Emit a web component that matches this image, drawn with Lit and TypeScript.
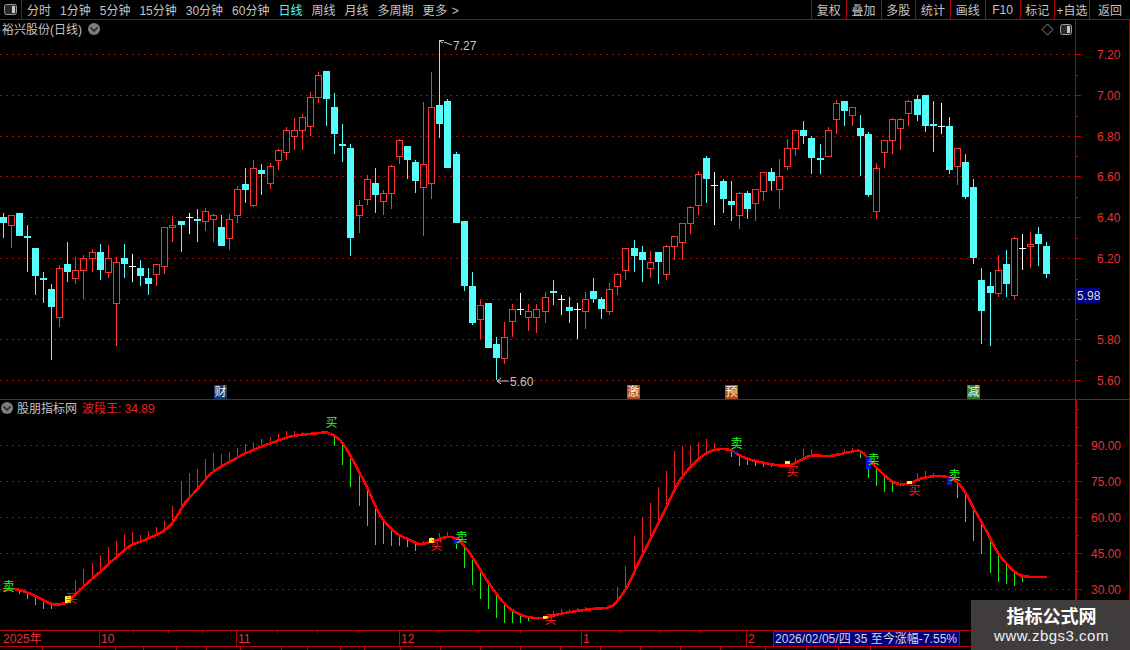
import { LitElement, html, css, svg } from "lit";
import { customElement } from "lit/decorators.js";

type Kind = "c" | "r" | "w";
type Candle = [number, number, number, number, number, Kind];

const CANDLES: Candle[] = [
  [3,213,217,223,238,"c"],[11,215,215,226,248,"r"],[19,213,213,236,236,"c"],[27,225,236,238,272,"c"],
  [35,248,248,276,295,"c"],[43,272,278,280,303,"c"],[51,284,289,307,360,"c"],[59,265,268,318,327,"r"],
  [67,242,264,272,282,"c"],[75,257,270,279,284,"r"],[83,255,258,271,299,"r"],[92,249,252,259,272,"r"],
  [100,244,252,270,280,"c"],[108,245,258,273,278,"r"],[116,257,262,304,346,"r"],[124,244,258,264,278,"c"],
  [132,254,266,267,282,"w"],[140,260,268,276,286,"c"],[148,268,278,284,295,"c"],[156,264,264,275,286,"r"],
  [164,227,227,267,274,"r"],[172,216,225,228,242,"r"],[181,221,221,225,252,"c"],[189,213,217,218,234,"w"],
  [197,209,219,221,242,"c"],[205,208,211,222,231,"r"],[213,214,215,220,242,"r"],[221,215,227,246,246,"c"],
  [229,214,219,239,250,"r"],[237,186,189,216,223,"r"],[245,168,184,190,203,"c"],[253,160,168,206,207,"r"],
  [261,164,170,174,195,"c"],[270,163,166,184,189,"r"],[278,149,150,161,170,"r"],[286,127,130,153,160,"r"],
  [294,118,130,137,150,"r"],[302,114,117,131,150,"r"],[310,92,97,127,136,"r"],[318,72,75,98,103,"r"],
  [326,71,71,99,126,"c"],[334,93,107,134,154,"c"],[342,124,144,146,162,"c"],[350,144,148,238,256,"c"],
  [359,200,205,216,233,"r"],[367,175,179,200,205,"r"],[375,168,183,195,213,"c"],[383,190,193,202,215,"r"],
  [391,165,166,194,209,"r"],[399,139,140,157,164,"r"],[407,146,146,160,179,"c"],[415,160,162,181,193,"c"],
  [423,102,164,188,236,"r"],[431,72,107,184,199,"r"],[439,40,105,124,138,"c"],[447,99,101,168,168,"c"],
  [456,152,154,223,223,"c"],[464,221,221,286,291,"c"],[472,272,286,323,325,"c"],[480,300,305,320,339,"r"],
  [488,303,303,348,348,"c"],[496,337,344,358,380,"c"],[504,322,337,359,364,"r"],[512,304,309,322,337,"r"],
  [520,293,309,310,315,"w"],[528,304,311,318,331,"r"],[536,304,309,318,333,"r"],[545,292,297,312,323,"r"],
  [553,280,291,293,305,"c"],[561,295,299,300,315,"w"],[569,297,307,311,323,"c"],[577,303,309,310,339,"w"],
  [585,292,299,312,329,"r"],[593,278,291,299,303,"c"],[601,297,299,309,319,"c"],[609,283,289,312,315,"r"],
  [617,273,274,287,295,"r"],[625,248,248,271,280,"r"],[634,240,248,256,272,"c"],[642,246,252,260,282,"c"],
  [650,251,262,269,278,"r"],[658,252,252,262,284,"c"],[666,245,246,275,280,"r"],[674,236,236,247,260,"r"],
  [682,223,223,243,260,"r"],[690,206,207,224,234,"r"],[698,171,174,206,215,"r"],[706,156,158,179,203,"c"],
  [714,172,185,186,225,"w"],[723,179,181,199,213,"c"],[731,181,201,205,221,"c"],[739,192,193,216,229,"r"],
  [747,191,193,209,219,"c"],[755,189,189,204,221,"r"],[763,172,172,192,201,"r"],[771,168,172,181,191,"c"],
  [779,159,176,190,209,"r"],[787,139,148,167,170,"r"],[795,129,130,149,156,"r"],[803,121,130,136,144,"c"],
  [811,136,138,158,174,"c"],[820,144,158,160,174,"c"],[828,127,130,157,157,"r"],[836,100,103,120,134,"r"],
  [844,101,101,111,126,"c"],[852,107,107,116,126,"r"],[860,115,128,136,176,"c"],[868,132,134,195,197,"c"],
  [876,163,168,212,219,"r"],[884,140,140,153,168,"r"],[892,118,119,141,154,"r"],[900,118,119,129,150,"r"],
  [908,100,101,114,126,"r"],[917,95,99,115,121,"c"],[925,95,95,126,132,"c"],[933,101,124,126,152,"c"],
  [941,103,126,127,134,"w"],[949,117,126,170,174,"c"],[957,148,148,167,185,"r"],[965,154,162,197,199,"c"],
  [973,179,187,258,264,"c"],[981,268,280,311,344,"c"],[990,272,286,293,346,"c"],[998,255,270,294,297,"r"],
  [1006,250,264,284,297,"c"],[1014,237,238,296,299,"r"],[1022,234,248,249,270,"w"],[1030,232,244,247,268,"r"],
  [1038,227,234,244,266,"c"],[1046,242,246,274,278,"c"],
];

const KNOTS: [number, number][] = [
  [3,590],[13,589],[23,591],[33,595],[43,600],[52,604],[62,604],[68,601],[75,595],[83,587],[100,572],[113,560],
  [130,546],[145,540],[165,530],[175,519],[185,503],[193,494],[200,486],[213,472],[233,460],[253,450],[277,441],[293,436],
  [320,433],[328,433],[340,440],[350,455],[358,470],[367,487],[380,515],[395,532],[410,540],[420,544],[433,541],
  [447,537],[457,539],[465,547],[473,558],[488,582],[503,602],[515,612],[528,617],[543,618],[560,614],[577,611],
  [593,609],[610,607],[618,600],[627,587],[640,560],[650,540],[665,510],[680,480],[700,458],[715,450],[730,450],
  [745,458],[770,464],[790,465],[810,456],[830,456],[850,452],[860,451],[867,457],[877,468],[890,480],[900,484],
  [910,483],[923,478],[937,476],[947,477],[957,482],[965,492],[973,507],[982,523],[990,538],[998,553],[1007,564],
  [1015,572],[1023,576],[1033,577],[1047,577],
];

const smooth = (pts: [number, number][]): [number, number][] => {
  const out: [number, number][] = [];
  for (let i = 0; i < pts.length - 1; i++) {
    const p0 = pts[Math.max(i - 1, 0)];
    const p1 = pts[i];
    const p2 = pts[i + 1];
    const p3 = pts[Math.min(i + 2, pts.length - 1)];
    const n = Math.max(Math.round((p2[0] - p1[0]) / 2), 1);
    for (let j = 0; j < n; j++) {
      const t = j / n;
      const t2 = t * t;
      const t3 = t2 * t;
      const f = (a: number, b: number, c: number, d: number) =>
        0.5 * (2 * b + (c - a) * t + (2 * a - 5 * b + 4 * c - d) * t2 + (3 * b - a - 3 * c + d) * t3);
      out.push([f(p0[0], p1[0], p2[0], p3[0]), f(p0[1], p1[1], p2[1], p3[1])]);
    }
  }
  out.push(pts[pts.length - 1]);
  return out;
};

const CURVE = smooth(KNOTS);

const curveY = (x: number): number => {
  for (let i = 1; i < CURVE.length; i++) {
    const [x0, y0] = CURVE[i - 1];
    const [x1, y1] = CURVE[i];
    if (x <= x1) return y0 + ((y1 - y0) * (x - x0)) / Math.max(x1 - x0, 0.001);
  }
  return CURVE[CURVE.length - 1][1];
};

const PRICE_LINES = [54, 95, 136, 176, 217, 258, 299, 339, 380];
const PRICE_LABELS: [number, string][] = [
  [54,"7.20"],[95,"7.00"],[136,"6.80"],[176,"6.60"],[217,"6.40"],[258,"6.20"],[339,"5.80"],[380,"5.60"],
];
const IND_LINES: [number, string][] = [[445,"90.00"],[481,"75.00"],[517,"60.00"],[553,"45.00"],[589,"30.00"]];
const SIGNALS: [number, number, string, string][] = [
  [3,592,"卖","#22ff22"],[66,604,"买","#ff2020"],[326,428,"买","#22ff22"],[431,551,"买","#ff2020"],
  [456,543,"卖","#22ff22"],[545,625,"买","#ff2020"],[731,449,"卖","#22ff22"],[787,477,"买","#ff2020"],
  [868,465,"卖","#22ff22"],[909,496,"买","#ff2020"],[949,481,"卖","#22ff22"],
];
const SQUARES: [number, number, number, number, string][] = [
  [65,596,6,7,"#ffee22"],[429,538,5,5,"#ffee22"],[454,539,5,5,"#1010ee"],[543,616,5,3,"#ffee22"],
  [785,461,5,3,"#ffee22"],[866,457,5,12,"#1010ee"],[907,481,5,3,"#ffee22"],[947,477,5,8,"#1010ee"],
  [3,589,6,1,"#1010ee"],[326,433,5,1,"#1010ee"],[733,451,5,2,"#1010ee"],
];
const TAGS: [number, string, string][] = [
  [214,"财","#123c70"],[627,"激","#b54a12"],[725,"预","#b54a12"],[967,"减","#2f7a2a"],
];
const DATE_MARKS: [number, string][] = [[99,"10"],[236,"11"],[399,"12"],[581,"1"],[746,"2"]];
const DATE_TICKS = [133,168,202,277,317,358,438,478,520,620,660,700,790];
const FOOT_TICKS = [42,115,143,176,206,240,281,307,340,364,400,440,480,520,560,600,640,680,720,765,806,838,870];
const LEFT_TABS = ["分时","1分钟","5分钟","15分钟","30分钟","60分钟","日线","周线","月线","多周期","更多 >"];
const RIGHT_TABS = ["复权","叠加","多股","统计","画线","F10","标记","+自选","返回"];

@customElement("app-root")
export class AppRoot extends LitElement {
  static styles = css`
    :host {
      display: block;
      width: 1130px;
      height: 650px;
      background: #000;
      overflow: hidden;
      position: relative;
      font-family: "Liberation Sans", "Noto Sans CJK SC", sans-serif;
      font-size: 12px;
      color: #c4c4c4;
    }
    .toolbar {
      display: flex;
      height: 19px;
      border-bottom: 1px solid #b00000;
      align-items: stretch;
    }
    .panel-btn {
      border-right: 1px solid #b00000;
      display: flex;
      align-items: center;
      padding-left: 4px;
      width: 17px;
    }
    .tabs {
      display: flex;
      align-items: center;
      gap: 9px;
      padding-left: 5px;
      flex: 1;
    }
    .tab.on { color: #54fcfc; }
    .more { letter-spacing: 0.6px; }
    .buttons { display: flex; }
    .btn {
      width: 33.75px;
      border-left: 1px solid #b00000;
      display: flex;
      align-items: center;
      justify-content: center;
      white-space: nowrap;
    }
    .btn:last-child { width: 40px; }
    .panel { display: block; width: 1130px; }
    .price { height: 380px; }
    .indicator { height: 230px; }
    .strip { height: 17px; }
    .foot { height: 3px; }
    svg text { font-family: "Liberation Sans", "Noto Sans CJK SC", sans-serif; font-size: 12px; }
    .crisp { shape-rendering: crispEdges; }
    .watermark {
      position: absolute;
      left: 971px;
      top: 600px;
      width: 159px;
      height: 50px;
      background: #413c3c;
      display: flex;
      flex-direction: column;
      align-items: center;
      padding-left: 2px;
      box-sizing: border-box;
    }
    .wm-title {
      color: #fff;
      font-size: 18px;
      font-weight: 700;
      line-height: 22px;
      margin-top: 4px;
      font-family: "Noto Sans CJK SC", sans-serif;
    }
    .wm-url {
      color: #eaf0fa;
      font-size: 15px;
      line-height: 20px;
      letter-spacing: 0.5px;
    }
  `;

  private candle(c: Candle) {
    const [x, h, t, b, l, k] = c;
    if (k === "r") {
      return svg`<rect x=${x} y=${h} width="1" height=${l - h} fill="#ff3232"></rect>
        <rect x=${x - 2.5} y=${t + 0.5} width="6" height=${Math.max(b - t - 1, 1)} fill="#000" stroke="#ff3232"></rect>`;
    }
    const col = k === "c" ? "#54fcfc" : "#ffffff";
    return svg`<rect x=${x} y=${h} width="1" height=${l - h} fill=${col}></rect>
      <rect x=${x - 3} y=${t} width="7" height=${Math.max(b - t, 1)} fill=${col}></rect>`;
  }

  private stems() {
    const out = [];
    for (const [px] of CANDLES) {
      if (px < 19) continue;
      const y = curveY(px);
      const rising = curveY(px - 4) - curveY(px + 4) > 0;
      const dy = rising ? curveY(px - 8) - y : curveY(px + 4) - curveY(px - 4);
      const len = Math.abs(dy) * 2.3;
      if (len < 2) continue;
      if (rising) {
        out.push(svg`<rect x=${px} y=${Math.round(y - len)} width="1" height=${Math.round(len)} fill="#e82020"></rect>`);
      } else {
        out.push(svg`<rect x=${px} y=${Math.round(y)} width="1" height=${Math.round(len)} fill="#18f018"></rect>`);
      }
    }
    return out;
  }

  render() {
    const minorPrice = PRICE_LINES.slice(0, -1).map((y, i) => Math.round((y + PRICE_LINES[i + 1]) / 2));
    const indY = IND_LINES.map((l) => l[0]);
    const minorInd = [409, 427, 463, 499, 535, 571, 607];
    const curvePts = CURVE.map((p) => `${p[0].toFixed(1)},${p[1].toFixed(1)}`).join(" ");
    return html`
      <div class="toolbar">
        <div class="panel-btn">
          <svg width="13" height="11" viewBox="0 0 13 11">
            <rect x="0.5" y="0.5" width="12" height="10" rx="2" fill="#2a2a2a" stroke="#9a9a9a"></rect>
            <rect x="8" y="2" width="3" height="7" fill="#c8c8c8"></rect>
          </svg>
        </div>
        <div class="tabs">
          ${LEFT_TABS.map((t) => html`<span class="tab ${t === "日线" ? "on" : ""} ${t.startsWith("更多") ? "more" : ""}">${t}</span>`)}
        </div>
        <div class="buttons">
          ${RIGHT_TABS.map((t) => html`<span class="btn">${t}</span>`)}
        </div>
      </div>

      <svg class="panel price" width="1130" height="380" viewBox="0 20 1130 380">
        <g class="crisp">
          ${PRICE_LINES.map((y) => svg`<line x1="0" x2="1075" y1=${y + 0.5} y2=${y + 0.5} stroke="#b00000" stroke-dasharray="2 4"></line>`)}
          ${CANDLES.map((c) => this.candle(c))}
          <rect x="1075" y="20" width="1" height="380" fill="#b80000"></rect>
          <rect x="1129" y="20" width="1" height="380" fill="#b80000"></rect>
          ${PRICE_LINES.map((y) => svg`<rect x="1076" y=${y} width="5" height="1" fill="#b80000"></rect>`)}
          ${minorPrice.map((y) => svg`<rect x="1076" y=${y} width="2" height="1" fill="#b80000"></rect>`)}
          <rect x="1076" y="288" width="24" height="15" fill="#000080"></rect>
          ${TAGS.map(([x, , c]) => svg`<rect x=${x} y="385" width="13" height="14" fill=${c}></rect>`)}
          <rect x="0" y="399" width="1130" height="1" fill="#c00000"></rect>
        </g>
        ${TAGS.map(([x, t]) => svg`<text x=${x + 0.5} y="396" fill="#f0f0f0">${t}</text>`)}
        ${PRICE_LABELS.map(([y, t]) => svg`<text x="1097" y=${y + 5} fill="#e83030">${t}</text>`)}
        <text x="1077" y="300" fill="#d8d8d8">5.98</text>

        <text x="2" y="34" fill="#c4c4c4">裕兴股份(日线)</text>
        <circle cx="94" cy="29" r="6" fill="#7c7c7c"></circle>
        <path d="M90.5 27.5 L94 31 L97.5 27.5" fill="none" stroke="#222" stroke-width="1.5"></path>
        <path d="M1047.5 24 L1053 29.5 L1047.5 35 L1042 29.5 Z" fill="none" stroke="#8a8a8a"></path>
        <rect x="1060.5" y="24.5" width="11" height="10" rx="2" fill="#2a2a2a" stroke="#9a9a9a"></rect>
        <rect x="1067" y="26" width="3" height="7" fill="#c8c8c8" class="crisp"></rect>

        <path d="M440 40.5 H444 M440 41 L443 43 M444 42 L452 45" fill="none" stroke="#c8c8c8"></path>
        <text x="453" y="50" fill="#c4c4c4">7.27</text>
        <path d="M497 381 H509 M497 381 L501 378 M497 381 L501 384" fill="none" stroke="#c8c8c8"></path>
        <text x="510" y="386" fill="#c4c4c4">5.60</text>
      </svg>

      <svg class="panel indicator" width="1130" height="230" viewBox="0 400 1130 230">
        <g class="crisp">
          ${indY.map((y) => svg`<line x1="0" x2="1075" y1=${y + 0.5} y2=${y + 0.5} stroke="#b00000" stroke-dasharray="2 4"></line>`)}
          ${this.stems()}
          <polyline points=${curvePts} fill="none" stroke="#ff0000" stroke-width="2.6"></polyline>
          ${SQUARES.map(([x, y, w, h, c]) => svg`<rect x=${x} y=${y} width=${w} height=${h} fill=${c}></rect>`)}
          <rect x="1075" y="400" width="2" height="230" fill="#c00000"></rect>
          <rect x="1129" y="400" width="1" height="230" fill="#b80000"></rect>
          ${indY.map((y) => svg`<rect x="1077" y=${y} width="5" height="1" fill="#c00000"></rect>`)}
          ${minorInd.map((y) => svg`<rect x="1077" y=${y} width="2" height="1" fill="#c00000"></rect>`)}
        </g>
        ${SIGNALS.map(([x, y, t, c]) => svg`<text x=${x - 0.5} y=${y - 1} fill=${c}>${t}</text>`)}
        ${IND_LINES.map(([y, t]) => svg`<text x="1091" y=${y + 5} fill="#e83030">${t}</text>`)}
        <circle cx="7" cy="408" r="6" fill="#7c7c7c"></circle>
        <path d="M3.5 406.5 L7 410 L10.5 406.5" fill="none" stroke="#222" stroke-width="1.5"></path>
        <text x="17" y="413" fill="#c4c4c4">股朋指标网</text>
        <text x="82" y="413" fill="#f02020">波段王: 34.89</text>
      </svg>

      <svg class="panel strip" width="1130" height="17" viewBox="0 630 1130 17">
        <g class="crisp">
          <rect x="0" y="630" width="1130" height="1" fill="#c00000"></rect>
          <rect x="0" y="646" width="1130" height="1" fill="#c00000"></rect>
          ${DATE_MARKS.map(([x]) => svg`<rect x=${x} y="630" width="1" height="16" fill="#c00000"></rect>`)}
          ${DATE_TICKS.map((x) => svg`<rect x=${x} y="630" width="1" height="3" fill="#c00000"></rect>`)}
          <rect x="773.5" y="631" width="186" height="15" fill="#000080" stroke="#c00000"></rect>
        </g>
        <text x="3" y="643" fill="#e83030">2025年</text>
        ${DATE_MARKS.map(([x, t]) => svg`<text x=${x + 2} y="643" fill="#e83030">${t}</text>`)}
        <text x="775" y="643" fill="#d4d4d4" textLength="182">2026/02/05/四 35 至今涨幅-7.55%</text>
      </svg>

      <svg class="panel foot" width="1130" height="3" viewBox="0 647 1130 3">
        <g class="crisp">
          ${FOOT_TICKS.map((x) => svg`<rect x=${x} y="647" width="1" height="3" fill="#c00000"></rect>`)}
        </g>
      </svg>

      <div class="watermark">
        <div class="wm-title">指标公式网</div>
        <div class="wm-url">www.zbgs3.com</div>
      </div>
    `;
  }
}
